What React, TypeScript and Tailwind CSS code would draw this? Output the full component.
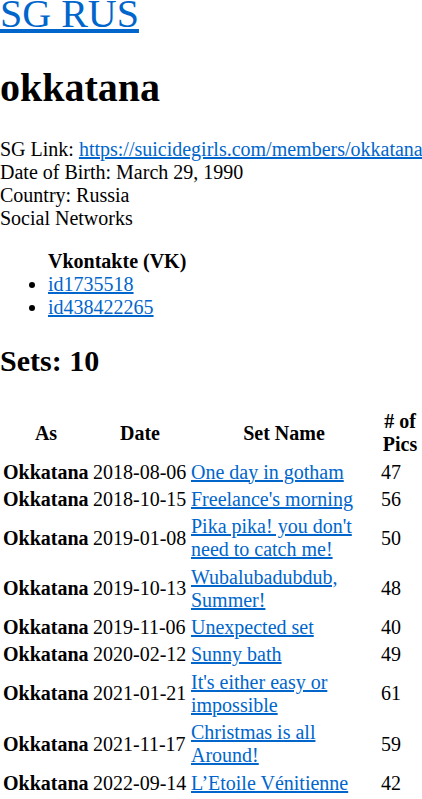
const sets = [
  { date: '2018-08-06', name: 'One day in gotham', pics: 47 },
  { date: '2018-10-15', name: "Freelance's morning", pics: 56 },
  { date: '2019-01-08', name: "Pika pika! you don't need to catch me!", pics: 50 },
  { date: '2019-10-13', name: 'Wubalubadubdub, Summer!', pics: 48 },
  { date: '2019-11-06', name: 'Unexpected set', pics: 40 },
  { date: '2020-02-12', name: 'Sunny bath', pics: 49 },
  { date: '2021-01-21', name: "It's either easy or impossible", pics: 61 },
  { date: '2021-11-17', name: 'Christmas is all Around!', pics: 59 },
  { date: '2022-09-14', name: 'L’Etoile Vénitienne', pics: 42 },
];

const link = 'text-[#0066cc] underline';

export default function App() {
  return (
    <div className="min-h-screen overflow-hidden bg-white font-['Times_New_Roman','Liberation_Serif',serif] text-[20px] leading-[normal] text-black">
      <h1 className="-mt-[10px] text-[40px] font-normal">
        <a href="#" className={link}>
          SG RUS
        </a>
      </h1>
      <h1 className="my-[27px] text-[40px] font-bold">okkatana</h1>
      <div>
        <div className="whitespace-nowrap">
          SG Link:{' '}
          <a href="#" className={link}>
            https://suicidegirls.com/members/okkatana
          </a>
        </div>
        <div>Date of Birth: March 29, 1990</div>
        <div>Country: Russia</div>
        <div>Social Networks</div>
      </div>
      <ul className="my-5 pl-12">
        <li className="font-bold">Vkontakte (VK)</li>
        <li className="list-disc">
          <a href="#" className={link}>
            id1735518
          </a>
        </li>
        <li className="list-disc">
          <a href="#" className={link}>
            id438422265
          </a>
        </li>
      </ul>
      <h2 className="mt-[25px] mb-[29px] text-[30px] font-bold">Sets: 10</h2>
      <table className="w-[422px] table-fixed border-separate border-spacing-[2px]">
        <colgroup>
          <col className="w-[88px]" />
          <col className="w-[96px]" />
          <col className="w-[188px]" />
          <col className="w-[40px]" />
        </colgroup>
        <thead>
          <tr>
            <th className="px-px py-[1.2px] text-center align-middle">As</th>
            <th className="px-px py-[1.2px] text-center align-middle">Date</th>
            <th className="px-px py-[1.2px] text-center align-middle">Set Name</th>
            <th className="px-px py-[1.2px] text-center align-middle"># of Pics</th>
          </tr>
        </thead>
        <tbody>
          {sets.map((s) => (
            <tr key={s.date}>
              <td className="whitespace-nowrap px-px py-[1.2px] align-middle font-bold">Okkatana</td>
              <td className="whitespace-nowrap px-px py-[1.2px] align-middle">{s.date}</td>
              <td className="px-px py-[1.2px] align-middle">
                <a href="#" className={link}>
                  {s.name}
                </a>
              </td>
              <td className="px-px py-[1.2px] align-middle">{s.pics}</td>
            </tr>
          ))}
        </tbody>
      </table>
    </div>
  );
}
